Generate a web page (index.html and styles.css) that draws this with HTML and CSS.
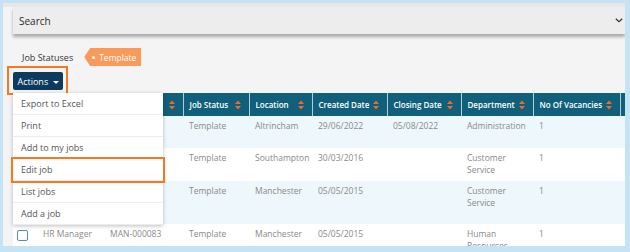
FILE: index.html
```html
<!DOCTYPE html>
<html>
<head>
	<meta charset="UTF-8">
	<title>Jobs - Actions</title>
	<link rel="stylesheet" href="styles.css">
</head>
<body>
	<div class="frame">
		<div class="search">
			<span>Search</span>
			<svg class="chevron" width="8" height="5" viewBox="0 0 8 5"><path d="M0.8 0.8 L4 3.8 L7.2 0.8" fill="none" stroke="#333" stroke-width="1.2"/></svg>
		</div>

		<div class="statuses">
			<span class="statuses-label">Job Statuses</span>
			<span class="tag"><i class="tag-dot"></i>Template</span>
		</div>

		<div class="actions">
			<button class="actions-btn">Actions <span class="caret"></span></button>
			<div class="highlight"></div>
			<ul class="menu">
				<li>Export to Excel</li>
				<li>Print</li>
				<li>Add to my jobs</li>
				<li class="selected">Edit job</li>
				<li>List jobs</li>
				<li>Add a job</li>
			</ul>
		</div>

		<div class="table-wrap">
			<table class="jobs">
				<colgroup>
					<col style="width:24px"><col style="width:67px"><col style="width:79px">
					<col style="width:66px"><col style="width:63px"><col style="width:75px">
					<col style="width:74px"><col style="width:72px"><col style="width:87px">
					<col style="width:80px">
				</colgroup>
				<thead>
					<tr>
						<th></th>
						<th><div class="th-in"><span></span><svg class="sort" width="6" height="10" viewBox="0 0 6 10"><path d="M0 4 L3 0.5 L6 4 Z M0 6 L3 9.5 L6 6 Z"/></svg></div></th>
						<th><div class="th-in"><span></span><svg class="sort" width="6" height="10" viewBox="0 0 6 10"><path d="M0 4 L3 0.5 L6 4 Z M0 6 L3 9.5 L6 6 Z"/></svg></div></th>
						<th><div class="th-in">Job Status <svg class="sort" width="6" height="10" viewBox="0 0 6 10"><path d="M0 4 L3 0.5 L6 4 Z M0 6 L3 9.5 L6 6 Z"/></svg></div></th>
						<th><div class="th-in">Location <svg class="sort" width="6" height="10" viewBox="0 0 6 10"><path d="M0 4 L3 0.5 L6 4 Z M0 6 L3 9.5 L6 6 Z"/></svg></div></th>
						<th><div class="th-in">Created Date <svg class="sort" width="6" height="10" viewBox="0 0 6 10"><path d="M0 4 L3 0.5 L6 4 Z M0 6 L3 9.5 L6 6 Z"/></svg></div></th>
						<th><div class="th-in">Closing Date <svg class="sort" width="6" height="10" viewBox="0 0 6 10"><path d="M0 4 L3 0.5 L6 4 Z M0 6 L3 9.5 L6 6 Z"/></svg></div></th>
						<th><div class="th-in">Department <svg class="sort" width="6" height="10" viewBox="0 0 6 10"><path d="M0 4 L3 0.5 L6 4 Z M0 6 L3 9.5 L6 6 Z"/></svg></div></th>
						<th><div class="th-in">No Of Vacancies <svg class="sort" width="6" height="10" viewBox="0 0 6 10"><path d="M0 4 L3 0.5 L6 4 Z M0 6 L3 9.5 L6 6 Z"/></svg></div></th>
						<th></th>
					</tr>
				</thead>
				<tbody>
					<tr class="row-a alt">
						<td><span class="check"></span></td>
						<td></td>
						<td></td>
						<td>Template</td>
						<td>Altrincham</td>
						<td>29/06/2022</td>
						<td>05/08/2022</td>
						<td>Administration</td>
						<td>1</td>
						<td></td>
					</tr>
					<tr class="row-b">
						<td><span class="check"></span></td>
						<td></td>
						<td></td>
						<td>Template</td>
						<td>Southampton</td>
						<td>30/03/2016</td>
						<td></td>
						<td>Customer Service</td>
						<td>1</td>
						<td></td>
					</tr>
					<tr class="row-c alt">
						<td><span class="check"></span></td>
						<td></td>
						<td></td>
						<td>Template</td>
						<td>Manchester</td>
						<td>05/05/2015</td>
						<td></td>
						<td>Customer Service</td>
						<td>1</td>
						<td></td>
					</tr>
					<tr>
						<td><span class="check"></span></td>
						<td>HR Manager</td>
						<td>MAN-000083</td>
						<td>Template</td>
						<td>Manchester</td>
						<td>05/05/2015</td>
						<td></td>
						<td>Human Resources</td>
						<td>1</td>
						<td></td>
					</tr>
				</tbody>
			</table>
		</div>
	</div>
</body>
</html>
```

FILE: styles.css
```css
body {
	margin: 0;
	font-family: "Open Sans", "Liberation Sans", sans-serif;
}
.frame {
	box-sizing: border-box;
	height: 252px;
	border: solid #c4e4f6;
	border-width: 3px 5px 6px 3px;
	background: linear-gradient(#e7e7e7 0, #e7e7e7 4px, #f4f4f4 4px);
	padding: 4px 0 0 10px;
	overflow: hidden;
}
.search {
	height: 27px;
	background: #ededed;
	box-shadow: 0 3px 3px rgba(0, 0, 0, 0.3);
	display: flex;
	align-items: center;
	justify-content: space-between;
	padding: 0 2px 0 6px;
	font-size: 10px;
	color: #2b2b2b;
}
.statuses {
	display: flex;
	align-items: center;
	gap: 11px;
	height: 18px;
	margin-top: 14px;
	padding-left: 9px;
	font-size: 9px;
	color: #333;
}
.tag {
	display: flex;
	align-items: center;
	height: 18px;
	padding: 0 5px 0 8px;
	background: #f99a5b;
	color: #fff;
	font-size: 8.5px;
	clip-path: polygon(6px 0, 100% 0, 100% 100%, 6px 100%, 0 50%);
}
.tag-dot {
	width: 3px;
	height: 3px;
	border-radius: 50%;
	background: #fff;
	margin-right: 4px;
}
.actions {
	position: relative;
	display: flex;
	margin-top: 6px;
}
.actions-btn {
	height: 18px;
	width: 50px;
	padding: 0;
	border: 0;
	border-radius: 2px;
	background: #0d3a5d;
	color: #fff;
	font: inherit;
	font-size: 9px;
}
.caret {
	display: inline-block;
	vertical-align: middle;
	margin-left: 2px;
	border-top: 3px solid #fff;
	border-left: 3px solid transparent;
	border-right: 3px solid transparent;
}
.highlight {
	position: absolute;
	left: -6px;
	top: -6px;
	width: 61px;
	height: 29px;
	box-sizing: border-box;
	border: 2px solid #f47a22;
}
.menu {
	position: absolute;
	left: 0;
	top: 21px;
	width: 150px;
	margin: 0;
	padding: 0;
	list-style: none;
	background: #fff;
	box-shadow: 0 1px 4px rgba(0, 0, 0, 0.25);
	z-index: 2;
	font-size: 9px;
	color: #555;
}
.menu li {
	height: 22px;
	line-height: 22px;
	padding-left: 8px;
	border-bottom: 1px solid #ececec;
	box-sizing: border-box;
}
.menu li.selected {
	outline: 2px solid #f47a22;
	outline-offset: 0;
}
.table-wrap {
	margin-top: 3px;
}
.jobs {
	table-layout: fixed;
	width: 687px;
	border-collapse: collapse;
	font-size: 8.5px;
	color: #8a8a8a;
}
.jobs th {
	height: 23px;
	padding: 0 8px 0 6px;
	background: #105f7b;
	color: #fff;
	font-size: 8px;
	font-weight: 600;
	text-align: left;
	white-space: nowrap;
	border-left: 1px solid #b9ccd4;
}
.jobs th:first-child {
	border-left: 0;
}
.th-in {
	display: flex;
	align-items: center;
	justify-content: space-between;
}
.sort {
	fill: #f06a2b;
	flex: none;
}
.jobs td {
	vertical-align: top;
	padding: 4px 6px;
	line-height: 12px;
	background: #fff;
}
.jobs tr.alt td {
	background: #eef7fb;
}
.row-a {
	height: 32px;
}
.row-b {
	height: 33px;
}
.row-c {
	height: 43px;
}
.jobs td:first-child {
	padding-left: 4px;
	padding-right: 0;
}
.check {
	display: block;
	width: 9px;
	height: 9px;
	margin-top: 2px;
	border: 1px solid #5b8fa6;
	border-radius: 2px;
	background: #fff;
}
```
